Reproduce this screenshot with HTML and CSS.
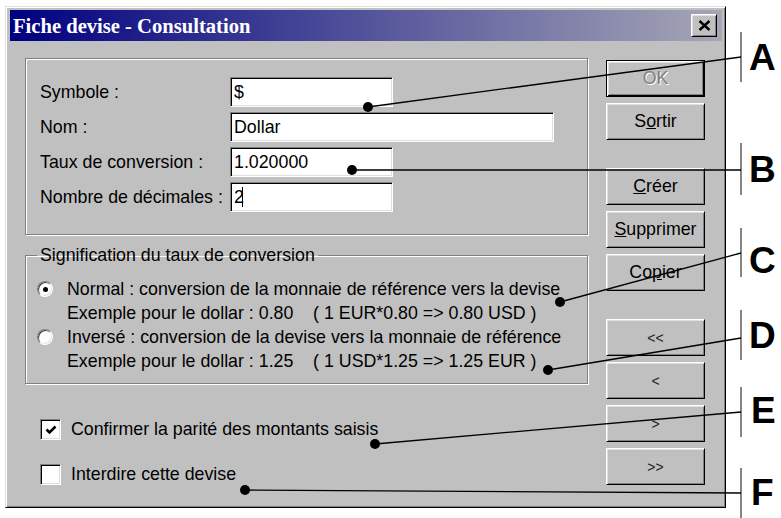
FILE: index.html
```html
<!DOCTYPE html>
<html lang="fr">
<head>
<meta charset="utf-8">
<title>Fiche devise - Consultation</title>
<link rel="stylesheet" href="styles.css">
</head>
<body>
<div class="window">
  <div class="titlebar">
    <span class="title">Fiche devise - Consultation</span>
    <span class="close"><svg width="13" height="11" viewBox="0 0 13 11"><path d="M1.5 1 L11.5 10 M11.5 1 L1.5 10" stroke="#000" stroke-width="2.4"/></svg></span>
  </div>
  <div class="client">
    <div class="left">
      <div class="group fields">
        <div class="row"><span class="label">Symbole :</span><div class="field short">$</div></div>
        <div class="row"><span class="label">Nom :</span><div class="field long">Dollar</div></div>
        <div class="row"><span class="label">Taux de conversion :</span><div class="field short">1.020000</div></div>
        <div class="row"><span class="label">Nombre de décimales :</span><div class="field short">2<span class="caret"></span></div></div>
      </div>
      <fieldset class="group sig">
        <legend>Signification du taux de conversion</legend>
        <div class="option">
          <span class="radio"><span class="dot"></span></span>
          <div class="opt-text">
            <div>Normal : conversion de la monnaie de référence vers la devise</div>
            <div class="pre">Exemple pour le dollar : 0.80    ( 1 EUR*0.80 =&gt; 0.80 USD )</div>
          </div>
        </div>
        <div class="option">
          <span class="radio"></span>
          <div class="opt-text">
            <div>Inversé : conversion de la devise vers la monnaie de référence</div>
            <div class="pre">Exemple pour le dollar : 1.25    ( 1 USD*1.25 =&gt; 1.25 EUR )</div>
          </div>
        </div>
      </fieldset>
      <div class="checks">
        <div class="check-row"><span class="checkbox"><svg width="14" height="14" viewBox="0 0 14 14"><path d="M2.5 6.5 L5.5 9.5 L11.5 3.5" fill="none" stroke="#000" stroke-width="2.6"/></svg></span><span class="check-label">Confirmer la parité des montants saisis</span></div>
        <div class="check-row"><span class="checkbox"></span><span class="check-label">Interdire cette devise</span></div>
      </div>
    </div>
    <div class="buttons">
      <div class="btn default"><span class="disabled">OK</span></div>
      <div class="btn">S<u>o</u>rtir</div>
      <div class="btn gap"><u>C</u>réer</div>
      <div class="btn"><u>S</u>upprimer</div>
      <div class="btn">Co<u>p</u>ier</div>
      <div class="btn gap nav">&lt;&lt;</div>
      <div class="btn nav">&lt;</div>
      <div class="btn nav">&gt;</div>
      <div class="btn nav">&gt;&gt;</div>
    </div>
  </div>
</div>
<svg class="annotations" width="781" height="518" viewBox="0 0 781 518">
  <g class="bars">
    <line x1="741" y1="32" x2="741" y2="82"/>
    <line x1="741" y1="143" x2="741" y2="195"/>
    <line x1="741" y1="228" x2="741" y2="277"/>
    <line x1="741" y1="310" x2="741" y2="360"/>
    <line x1="741" y1="387" x2="741" y2="437"/>
    <line x1="741" y1="468" x2="741" y2="518"/>
  </g>
  <g class="leaders">
    <line x1="368" y1="107" x2="741" y2="57"/>
    <line x1="352" y1="170" x2="741" y2="170"/>
    <line x1="560" y1="302" x2="741" y2="253"/>
    <line x1="548" y1="370" x2="741" y2="338"/>
    <line x1="375" y1="444" x2="741" y2="412"/>
    <line x1="245" y1="490" x2="741" y2="493"/>
  </g>
  <g class="dots">
    <circle cx="368" cy="107" r="5"/>
    <circle cx="352" cy="170" r="5"/>
    <circle cx="560" cy="302" r="5"/>
    <circle cx="548" cy="370" r="5"/>
    <circle cx="375" cy="444" r="5"/>
    <circle cx="245" cy="490" r="5"/>
  </g>
  <g class="letters">
    <text x="749" y="70">A</text>
    <text x="749" y="182">B</text>
    <text x="749" y="273">C</text>
    <text x="749" y="348">D</text>
    <text x="751" y="423">E</text>
    <text x="751" y="505">F</text>
  </g>
</svg>
</body>
</html>
```
FILE: styles.css
```css
html, body {
  margin: 0;
}
body {
  position: relative;
  box-sizing: border-box;
  width: 781px;
  height: 518px;
  overflow: hidden;
  padding: 6px 0 0 5px;
  background: #fff;
  font-family: "Liberation Sans", Arial, sans-serif;
  font-size: 17.8px;
  color: #000;
}
.window {
  box-sizing: border-box;
  width: 721px;
  height: 502px;
  background: #c0c0c0;
  border: 1px solid;
  border-color: #dfdfdf #000 #000 #dfdfdf;
  box-shadow: inset 1px 1px #fff, inset -1px -1px #808080;
  padding: 3px 3px 0 4px;
}
.titlebar {
  height: 31px;
  display: flex;
  align-items: center;
  justify-content: space-between;
  background: linear-gradient(to right, #000080, #a6a6b6);
  padding: 0 5px 0 3px;
}
.title {
  font-family: "Liberation Serif", "Times New Roman", serif;
  font-weight: bold;
  font-size: 20.6px;
  color: #fff;
  margin-top: 1px;
}
.close {
  box-sizing: border-box;
  width: 26px;
  height: 23px;
  display: flex;
  align-items: center;
  justify-content: center;
  background: #c0c0c0;
  border: 1px solid;
  border-color: #fff #000 #000 #fff;
  box-shadow: inset 1px 1px #dfdfdf, inset -1px -1px #808080;
}
.client {
  display: flex;
  padding: 17px 17px 0 15px;
}
.left {
  width: 563px;
}
.group {
  box-sizing: border-box;
  border: 1px solid #808080;
  box-shadow: inset 1px 1px #fff, 1px 1px #fff;
}
.fields {
  height: 177px;
  padding: 18px 0 0 14px;
  display: flex;
  flex-direction: column;
  gap: 5px;
}
.row {
  display: flex;
  align-items: center;
  height: 30px;
}
.label {
  width: 190px;
}
.field {
  box-sizing: border-box;
  height: 30px;
  line-height: 26px;
  padding: 0 3px;
  background: #fff;
  border: 1px solid;
  border-color: #808080 #fff #fff #808080;
  box-shadow: inset 1px 1px #000, inset -1px -1px #dfdfdf;
  display: flex;
  align-items: center;
}
.short { width: 163px; }
.long { width: 324px; }
.caret {
  display: inline-block;
  width: 1px;
  height: 20px;
  background: #000;
  margin-left: -2px;
}
.sig {
  margin: 11px 0 0 0;
  padding: 13px 0 10px 11px;
  min-width: 0;
}
.sig legend {
  padding: 0 3px;
  line-height: 18px;
}
.option {
  display: flex;
  align-items: flex-start;
}
.radio {
  box-sizing: border-box;
  width: 16px;
  height: 16px;
  margin: 4px 14px 0 0;
  border-radius: 50%;
  background: #fff;
  border: 1px solid;
  border-color: #808080 #fff #fff #808080;
  box-shadow: inset 1px 1px #404040, inset -1px -1px #dfdfdf;
  display: flex;
  align-items: center;
  justify-content: center;
  flex: none;
}
.dot {
  width: 5px;
  height: 5px;
  border-radius: 50%;
  background: #000;
}
.opt-text {
  line-height: 24px;
}
.pre {
  white-space: pre;
}
.checks {
  margin-top: 35px;
  padding-left: 15px;
  display: flex;
  flex-direction: column;
  gap: 24px;
}
.check-row {
  display: flex;
  align-items: center;
  height: 21px;
}
.checkbox {
  box-sizing: border-box;
  width: 21px;
  height: 21px;
  background: #fff;
  border: 1px solid;
  border-color: #808080 #fff #fff #808080;
  box-shadow: inset 1px 1px #000, inset -1px -1px #dfdfdf;
  display: flex;
  align-items: center;
  justify-content: center;
}
.check-label {
  margin-left: 10px;
}
.buttons {
  width: 99px;
  margin-left: 18px;
  padding-top: 2px;
  display: flex;
  flex-direction: column;
  gap: 6px;
}
.btn {
  box-sizing: border-box;
  height: 37px;
  display: flex;
  align-items: center;
  justify-content: center;
  border: 1px solid;
  border-color: #fff #000 #000 #fff;
  box-shadow: inset 1px 1px #dfdfdf, inset -1px -1px #808080;
}
.btn.gap {
  margin-top: 22px;
}
.btn.default {
  border-color: #000;
  box-shadow: inset 1px 1px #fff, inset -1px -1px #000, inset 2px 2px #dfdfdf, inset -2px -2px #808080;
}
.disabled {
  color: #808080;
  text-shadow: 1px 1px 0 #fff;
}
.nav {
  font-size: 14px;
  color: #222;
}
.annotations {
  position: absolute;
  left: 0;
  top: 0;
  pointer-events: none;
}
.bars line {
  stroke: #666;
  stroke-width: 1.6;
}
.leaders line {
  stroke: #000;
  stroke-width: 1.3;
}
.dots circle {
  fill: #000;
}
.letters text {
  font-family: "Liberation Sans", Arial, sans-serif;
  font-weight: bold;
  font-size: 37px;
  fill: #000;
}
```
